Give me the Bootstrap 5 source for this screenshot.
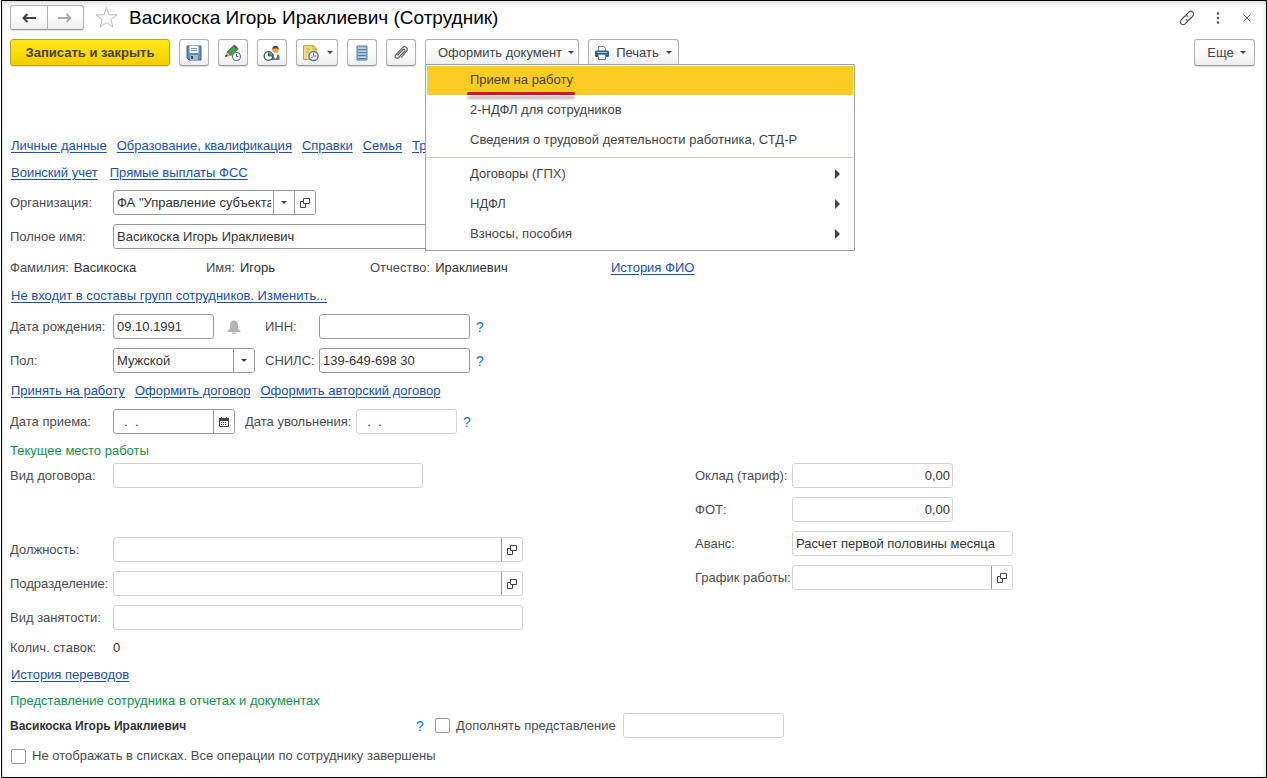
<!DOCTYPE html>
<html lang="ru">
<head>
<meta charset="utf-8">
<meta name="viewport" content="width=device-width, initial-scale=1">
<title>Васикоска Игорь Ираклиевич (Сотрудник)</title>
<link href="https://cdn.jsdelivr.net/npm/bootstrap@5.3.0/dist/css/bootstrap.min.css" rel="stylesheet">
<style>
  body { font-family: "Liberation Sans", Arial, sans-serif; font-size: 13px; line-height: 20px; color: #4d4d4d; background: #fff; }
  .window-frame { min-height: 100vh; margin-left: 1px; border: 1px solid #000; padding: 4px 11px 8px 8px; box-shadow: inset 0 2px 5px #d8d8d8; }
  a { color: #1a4fb4; text-underline-offset: 2px; }
  h1 { font-size: 19px; line-height: 24px; color: #000; }
  svg { display: block; flex: none; }

  /* command bar */
  .tool { height: 27px; padding: 0; border: 1px solid #b0b0b0; border-bottom-color: #979797; border-radius: 3px; background: linear-gradient(#fff 40%, #ededed); color: #444; font-size: 13px; line-height: 20px; display: inline-flex; align-items: center; justify-content: center; box-shadow: 0 1px 1px #ddd; }
  .tool-icon { width: 30px; }
  .tool-drop { width: 42px; gap: 7px; }
  .tool-main { width: 160px; background: linear-gradient(#ffe81f, #f9d900 60%, #f1cc00); border-color: #c3a400; color: #4a4214; font-weight: 700; }
  .tool-doc { width: 154px; gap: 6px; padding-left: 8px; }
  .tool-print { width: 91px; gap: 7px; }
  .tool-more { width: 61px; gap: 6px; padding-left: 4px; }
  .bar { gap: 9px; margin-top: 9px; margin-bottom: 71px; }
  .nav-pair { width: 74px; height: 25px; }
  .nav-pair .tool { height: 25px; flex: 1; }
  .head-icons { gap: 17px; padding-right: 2px; }
  .bare { border: 0; background: none; padding: 0; color: #444; }
  .star { margin: 0 11px; }
  .caret { width: 0; height: 0; border: 3px solid transparent; border-top-color: #444; border-bottom: 0; }

  /* open menu */
  .doc-menu { --bs-dropdown-zindex: 10; top: 100%; left: 0; margin-top: -2px; width: 430px; padding: 1px 1px 0; border: 1px solid #a0a0a0; border-radius: 0; font-size: 13px; color: #444; }
  .doc-menu .dropdown-item { height: 30px; padding: 0 13px 0 43px; line-height: 28px; color: #444; display: flex; align-items: flex-start; justify-content: space-between; }
  .doc-menu .dropdown-item.active { background: linear-gradient(#facb20, #facb20) 0 0 / 100% 29px no-repeat; color: #4d411f; }
  .doc-menu .dropdown-divider { margin: 1px 0 2px; border-color: #cfcfc0; opacity: 1; }
  .underlined { position: relative; }
  .underlined::after { content: ""; position: absolute; left: -3px; right: -2px; bottom: -1px; height: 3px; border-radius: 2px; background: #d8102c; box-shadow: 0 4px 3px rgba(0,0,0,.3); }
  .sub { width: 0; height: 0; border: 5px solid transparent; border-left-color: #444; border-right: 0; margin-top: 9px; }

  /* form */
  .link-row { display: flex; gap: 12px; padding-left: 1px; }
  .link-row.tight { gap: 10px; }
  .slim { line-height: 18px; margin-bottom: 9px; }
  .line { display: flex; align-items: center; margin-bottom: 9px; }
  .cap { width: 103px; flex: none; white-space: nowrap; }
  .cap-r { width: 97px; flex: none; white-space: nowrap; }
  .cap-id { width: 54px; flex: none; }
  .cap-fired { width: 111px; flex: none; white-space: nowrap; }
  .apart { margin-left: 10px; }
  .field { position: relative; display: flex; height: 25px; border: 1px solid #9a9a9a; border-radius: 3px; background: #fff; overflow: hidden; flex: none; max-width: 100%; }
  .field.off { border-color: #d2d2d2; }
  .field input, .field select { flex: 1; min-width: 0; width: 100%; border: 0; padding: 0 2px 0 3px; background: none; color: #333; font-size: 13px; line-height: 20px; appearance: none; outline: 0; }
  .field button, .field .pick { width: 21px; flex: none; border: 0; border-left: 1px solid #9a9a9a; background: #fff; padding: 0; color: #444; display: flex; align-items: center; justify-content: center; }
  .w-day { width: 101px; } .w-hire { width: 122px; } .w-sex { width: 142px; } .w-id { width: 151px; }
  .w-sum { width: 161px; } .w-org { width: 203px; } .w-adv { width: 221px; }
  .w-kind { width: 310px; } .w-long { width: 410px; } .w-full { width: 690px; }
  .val { color: #333; }
  .help { color: #0b78c2; text-decoration: none; font-size: 14px; margin-left: 6px; }
  .help-wide { width: 19px; margin-left: 0; }
  .bell { width: 51px; padding-left: 13px; }
  .names { display: grid; grid-template-columns: 196px 164px 241px 1fr; }
  .names .val { margin-left: 5px; }
  .section-title { color: #0a9648; font-size: 13px; line-height: 16px; margin: 0 0 4px; }
  .place { display: grid; grid-template-columns: 685px 1fr; }
  .spaced { margin-bottom: 49px; }
  .tick { width: 15px; height: 15px; margin: 0 6px 0 0; appearance: none; border: 1px solid #9a9a9a; border-radius: 2px; background: #fff; }
  .tick:checked { background: #9a9a9a; }
  .shown-name { width: 406px; font-weight: 700; font-size: 12px; color: #333; }
  .add-label { width: 167px; }
</style>
</head>
<body>
<svg width="0" height="0" class="position-absolute" aria-hidden="true">
  <symbol id="open" viewBox="0 0 10 10"><path d="M3.500.5h6v5h-6zM3.500 3.500h-3v6h5v-4" fill="none" stroke="#444"/></symbol>
</svg>
<main class="window-frame">
  <header class="d-flex align-items-center">
    <div class="btn-group nav-pair">
      <button class="btn tool" aria-label="Назад"><svg width="14" height="10" viewBox="0 0 14 10"><path d="M1 5h13M5.500 1 1.500 5l4 4" fill="none" stroke="#444" stroke-width="2"/></svg></button>
      <button class="btn tool" aria-label="Вперед"><svg width="14" height="10" viewBox="0 0 14 10"><path d="M0 5h13M8.500 1l4 4-4 4" fill="none" stroke="#aaa" stroke-width="1.800"/></svg></button>
    </div>
    <button class="bare star" aria-label="В избранное"><svg width="23" height="23" viewBox="0 0 23 23"><path d="M11.500 1.500l2.600 7.300 7.900.1-6.200 4.700 2.200 7.500-6.500-4.500-6.500 4.500 2.200-7.500L1 8.900l7.900-.1z" fill="#fff" stroke="#b4bac2"/></svg></button>
    <h1 class="m-0 fw-normal">Васикоска Игорь Ираклиевич (Сотрудник)</h1>
    <div class="head-icons d-flex align-items-center ms-auto">
      <button class="bare" aria-label="Ссылка"><svg width="16" height="16" viewBox="0 0 16 16" fill="none" stroke="#555" stroke-width="1.200"><path d="M7 5l2.800-2.800a2.800 2.800 0 0 1 4 4L10.500 9.500a2.700 2.700 0 0 1-3.800 0M9 11l-2.800 2.800a2.800 2.800 0 0 1-4-4L5.500 6.500a2.700 2.700 0 0 1 3.800 0"/></svg></button>
      <button class="bare" aria-label="Меню"><svg width="12" height="12" viewBox="0 0 12 12" fill="#555"><circle cx="6" cy="1.500" r="1.300"/><circle cx="6" cy="6" r="1.300"/><circle cx="6" cy="10.500" r="1.300"/></svg></button>
      <button class="bare" aria-label="Закрыть"><svg width="12" height="12" viewBox="0 0 12 12"><path d="M2.500 2.500l7 7M9.500 2.500l-7 7" stroke="#666"/></svg></button>
    </div>
  </header>

  <div class="bar d-flex">
    <button class="btn tool tool-main">Записать и закрыть</button>
    <button class="btn tool tool-icon" aria-label="Записать"><svg width="16" height="16" viewBox="0 0 16 16"><path d="M1 1h14v14H3l-2-2z" fill="#6391bd" stroke="#365f8c"/><path d="M3.500 1h9v7h-9z" fill="#fff"/><path d="M5 3.500h6M5 5.500h6" stroke="#7799bb"/><path d="M4 10h8v5H4z" fill="#aab4bd"/><path d="M5 11h2v3H5z" fill="#2e4b6b"/></svg></button>
    <button class="btn tool tool-icon" aria-label="Изменить на дату"><svg width="18" height="18" viewBox="0 0 18 18"><path d="M1 13l2-5 4 3.500z" fill="#d9a878"/><path d="M1 13l1-2.500L4 12z" fill="#333"/><path d="M3 8l6-6 4.500 4L7 11.500z" fill="#43a047" stroke="#2b6d30" stroke-width=".6"/><path d="M9 2l1.500-1.500 4 4L13.500 6z" fill="#505a60"/><circle cx="12.500" cy="12.500" r="4" fill="#fff" stroke="#5c7a96" stroke-width="1.200"/><path d="M12.500 10v2.500h2" fill="none" stroke="#456"/></svg></button>
    <button class="btn tool tool-icon" aria-label="Состояние сотрудника"><svg width="18" height="18" viewBox="0 0 18 18"><path d="M8 16v-3.500q0-2 2-2h4.500q2 0 2 2V16H8z" fill="#667482"/><path d="M11 10h3v3l-1.500 2L11 13z" fill="#fff"/><circle cx="12.500" cy="5.800" r="3.200" fill="#f0a63c"/><path d="M9.300 5.500q0-3.700 3.200-3.700t3.200 3.700q-3.200-2.300-6.400 0z" fill="#60432b"/><circle cx="5.500" cy="12" r="4.300" fill="#fff" stroke="#40505c" stroke-width="1.300"/><path d="M5.500 12V8.500A3.500 3.500 0 0 1 9 12z" fill="#32a84c"/><path d="M5.500 8.500V12H9" fill="none" stroke="#365"/></svg></button>
    <button class="btn tool tool-drop" aria-label="Отчеты на дату"><svg width="18" height="18" viewBox="0 0 18 18"><path d="M1.500 1.500h10l3 3v11h-13z" fill="#f4db83" stroke="#c9a13c"/><path d="M11 1.500V5h3.500M4 5h4M4 8h3" fill="none" stroke="#c9a13c"/><circle cx="11.500" cy="12" r="4.600" fill="#fff" stroke="#3e80c2" stroke-width="1.500"/><path d="M11.500 12V8.500M11.500 12h3M11.500 12l-2 2" stroke="#df4640"/></svg><span class="caret"></span></button>
    <button class="btn tool tool-icon" aria-label="Список"><svg width="12" height="16" viewBox="0 0 12 16"><path d="M1 1h10v14H1z" fill="#9dbfd6" stroke="#557f9f"/><path d="M2 4.500h8M2 7.500h8M2 10.500h8M2 13.500h8" stroke="#557f9f"/><path d="M2 3.500h8M2 6.500h8M2 9.500h8M2 12.500h8" stroke="#bcd5e4"/></svg></button>
    <button class="btn tool tool-icon" aria-label="Присоединенные файлы"><svg width="16" height="16" viewBox="0 0 16 16"><path d="M4.500 10.500 10 4.500c1-1 2.700.3 1.700 1.500l-6 6.500c-2 2-4.700-.3-3-2.500l6.800-7.300c2.500-2.500 6.300.5 4 3.500L8 12.800" fill="none" stroke="#666" stroke-width="1.200"/></svg></button>
    <div class="dropdown">
      <button class="btn tool tool-doc" aria-expanded="true">Оформить документ<span class="caret"></span></button>
      <ul class="dropdown-menu doc-menu show">
        <li><a class="dropdown-item active" href="#"><span class="underlined">Прием на работу</span></a></li>
        <li><a class="dropdown-item" href="#">2-НДФЛ для сотрудников</a></li>
        <li><a class="dropdown-item" href="#">Сведения о трудовой деятельности работника, СТД-Р</a></li>
        <li><hr class="dropdown-divider"></li>
        <li><a class="dropdown-item" href="#">Договоры (ГПХ)<span class="sub"></span></a></li>
        <li><a class="dropdown-item" href="#">НДФЛ<span class="sub"></span></a></li>
        <li><a class="dropdown-item" href="#">Взносы, пособия<span class="sub"></span></a></li>
      </ul>
    </div>
    <button class="btn tool tool-print"><svg width="14" height="14" viewBox="0 0 14 14"><path d="M3.500 5V.5h5l2 2V5" fill="#fff" stroke="#6d8aa3"/><rect y="4.500" width="14" height="6.500" rx="1.500" fill="#2f608a"/><path d="M2 6.500h10" stroke="#9fc0da"/><path d="M3.500 8.500h7v5h-7z" fill="#fff" stroke="#6d8aa3"/></svg>Печать<span class="caret"></span></button>
    <button class="btn tool tool-more ms-auto">Еще<span class="caret"></span></button>
  </div>

  <nav class="link-row tight slim"><a href="#">Личные данные</a><a href="#">Образование, квалификация</a><a href="#">Справки</a><a href="#">Семья</a><a href="#">Трудовая деятельность</a></nav>
  <nav class="link-row slim mb-2"><a href="#">Воинский учет</a><a href="#">Прямые выплаты ФСС</a></nav>

  <div class="line">
    <label class="cap" for="org">Организация:</label>
    <div class="field w-org"><input id="org" value="ФА &quot;Управление субъектами&quot;"><button aria-label="Выбрать"><span class="caret"></span></button><button aria-label="Открыть"><svg width="10" height="10"><use href="#open"/></svg></button></div>
  </div>
  <div class="line">
    <label class="cap" for="full">Полное имя:</label>
    <div class="field w-full"><input id="full" value="Васикоска Игорь Ираклиевич"></div>
  </div>
  <div class="names mb-2">
    <div>Фамилия:<span class="val">Васикоска</span></div>
    <div>Имя:<span class="val">Игорь</span></div>
    <div>Отчество:<span class="val">Ираклиевич</span></div>
    <div><a href="#">История ФИО</a></div>
  </div>
  <div class="link-row mb-2"><a href="#">Не входит в составы групп сотрудников. Изменить...</a></div>
  <div class="line">
    <label class="cap" for="born">Дата рождения:</label>
    <div class="field w-day"><input id="born" value="09.10.1991"></div>
    <div class="bell"><svg width="14" height="14" viewBox="0 0 14 14" fill="#b3b3b3"><path d="M3 9V5a4 4.500 0 0 1 8 0v4l2.500 2v1H.5v-1zM5 12.500h4a2 1.500 0 0 1-4 0z"/></svg></div>
    <label class="cap-id" for="inn">ИНН:</label>
    <div class="field w-id"><input id="inn"></div>
    <a class="help" href="#">?</a>
  </div>
  <div class="line mb-2">
    <label class="cap" for="sex">Пол:</label>
    <div class="field w-sex"><select id="sex"><option>Мужской</option><option>Женский</option></select><span class="pick"><span class="caret"></span></span></div>
    <label class="cap-id apart" for="snils">СНИЛС:</label>
    <div class="field w-id"><input id="snils" value="139-649-698 30"></div>
    <a class="help" href="#">?</a>
  </div>
  <div class="link-row tight mb-2"><a href="#">Принять на работу</a><a href="#">Оформить договор</a><a href="#">Оформить авторский договор</a></div>
  <div class="line">
    <label class="cap" for="hired">Дата приема:</label>
    <div class="field w-hire"><input id="hired" value="  .  ."><button aria-label="Календарь"><svg width="10" height="10" viewBox="0 0 10 10"><path d="M.5 2h9v7.500h-9z" fill="#fff" stroke="#444"/><path d="M0 1h10v3H0zM2 0h1v1H2zM7 0h1v1H7z" fill="#444"/><path d="M2 5.500h6M2 7.500h6" stroke="#444" stroke-dasharray="1 1"/></svg></button></div>
    <label class="cap-fired apart" for="fired">Дата увольнения:</label>
    <div class="field off w-day"><input id="fired" value="  .  ." readonly></div>
    <a class="help" href="#">?</a>
  </div>
  <h2 class="section-title">Текущее место работы</h2>

  <div class="place">
    <div>
      <div class="line spaced"><label class="cap" for="kind">Вид договора:</label><div class="field off w-kind"><input id="kind" readonly></div></div>
      <div class="line"><label class="cap" for="post">Должность:</label><div class="field off w-long"><input id="post" readonly><button aria-label="Открыть"><svg width="10" height="10"><use href="#open"/></svg></button></div></div>
      <div class="line"><label class="cap" for="dept">Подразделение:</label><div class="field off w-long"><input id="dept" readonly><button aria-label="Открыть"><svg width="10" height="10"><use href="#open"/></svg></button></div></div>
      <div class="line mb-2"><label class="cap" for="empl">Вид занятости:</label><div class="field off w-long"><input id="empl" readonly></div></div>
      <div class="d-flex mb-2"><span class="cap">Колич. ставок:</span><span class="val">0</span></div>
    </div>
    <div>
      <div class="line"><label class="cap-r" for="pay">Оклад (тариф):</label><div class="field off w-sum"><input id="pay" class="text-end" value="0,00" readonly></div></div>
      <div class="line"><label class="cap-r" for="fot">ФОТ:</label><div class="field off w-sum"><input id="fot" class="text-end" value="0,00" readonly></div></div>
      <div class="line"><label class="cap-r" for="adv">Аванс:</label><div class="field off w-adv"><input id="adv" value="Расчет первой половины месяца" readonly></div></div>
      <div class="line"><label class="cap-r" for="plan">График работы:</label><div class="field off w-adv"><input id="plan" readonly><button aria-label="Открыть"><svg width="10" height="10"><use href="#open"/></svg></button></div></div>
    </div>
  </div>
  <div class="link-row slim"><a href="#">История переводов</a></div>
  <h2 class="section-title">Представление сотрудника в отчетах и документах</h2>
  <div class="line mb-2">
    <span class="shown-name">Васикоска Игорь Ираклиевич</span>
    <a class="help help-wide" href="#">?</a>
    <input class="tick" type="checkbox" id="add"><label class="add-label" for="add">Дополнять представление</label>
    <div class="field off w-sum"><input aria-label="Дополнение представления" readonly></div>
  </div>
  <div class="d-flex align-items-center link-row gap-0"><input class="tick" type="checkbox" id="hide"><label for="hide">Не отображать в списках. Все операции по сотруднику завершены</label></div>
</main>
<script src="https://cdn.jsdelivr.net/npm/bootstrap@5.3.0/dist/js/bootstrap.bundle.min.js"></script>
</body>
</html>
